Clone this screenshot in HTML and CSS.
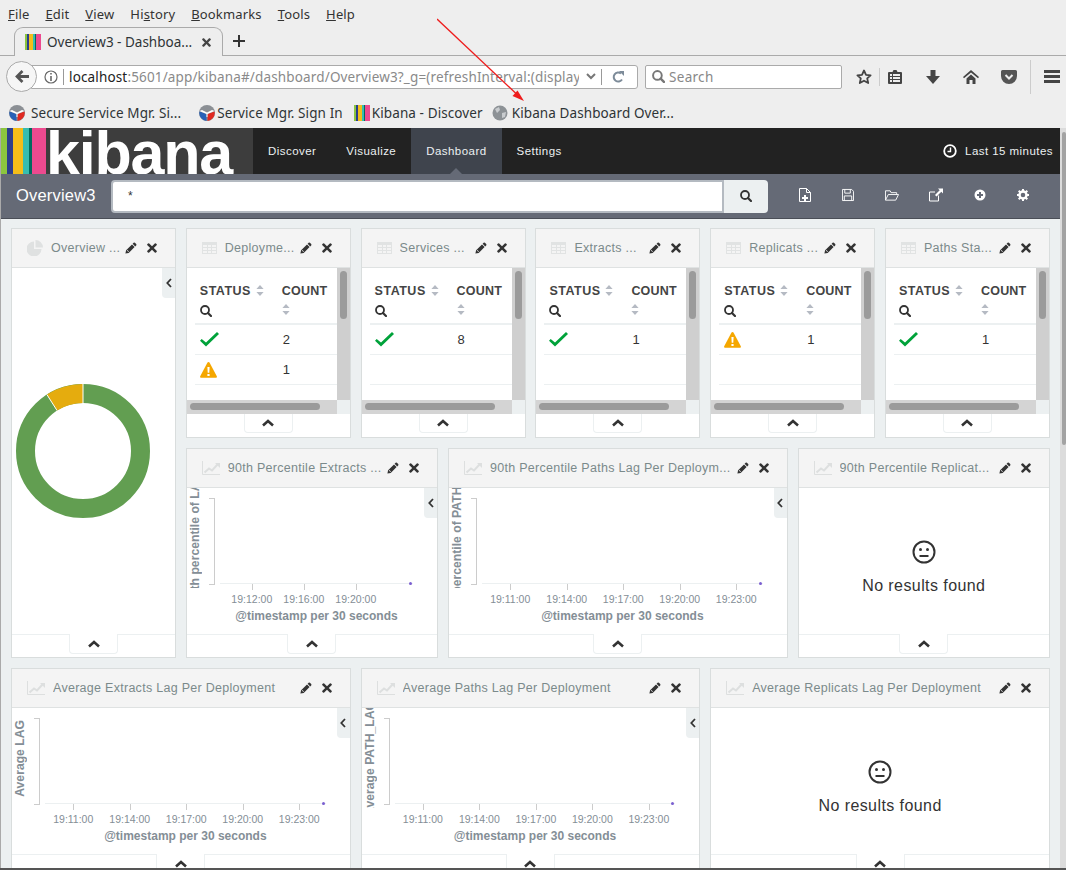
FILE: index.html
```html
<!DOCTYPE html>
<html lang="en">
<head>
    <meta charset="UTF-8">
    <title>Overview3 - Dashboard</title>
    <link rel="stylesheet" href="styles.css">
</head>
<body>
<svg class="defs" width="0" height="0">
    <symbol id="i-pencil" viewBox="0 0 12 12"><path d="M8.600.8a1 1 0 0 1 1.300 0l1.300 1.300a1 1 0 0 1 0 1.300l-1 1L7.600 1.800zM7 2.400 9.600 5 3.700 10.900.4 11.600 1.100 8.300zM1.900 8.600l1.500 1.500.5-.5-1.500-1.500z"/></symbol>
    <symbol id="i-close" viewBox="0 0 10 10"><path d="M2.200.4 5 3.200 7.800.4a.8.8 0 0 1 1.100 0l.7.7a.8.8 0 0 1 0 1.100L6.800 5l2.800 2.800a.8.8 0 0 1 0 1.100l-.7.7a.8.8 0 0 1-1.100 0L5 6.800 2.200 9.600a.8.8 0 0 1-1.100 0l-.7-.7a.8.8 0 0 1 0-1.100L3.200 5 .4 2.200a.8.8 0 0 1 0-1.100l.7-.7a.8.8 0 0 1 1.100 0z"/></symbol>
    <symbol id="i-search" viewBox="0 0 12 12"><path fill="none" stroke="currentColor" stroke-width="1.800" d="M5 1a4 4 0 1 0 0 8 4 4 0 0 0 0-8z"/><path fill="none" stroke="currentColor" stroke-width="2.200" stroke-linecap="round" d="M8 8l3 3"/></symbol>
    <symbol id="i-table" viewBox="0 0 15 12"><path fill="#e1e3e3" d="M0 0h15v12H0z"/><path fill="#f4f4f4" d="M1 3h4v2H1zm5 0h3v2H6zm4 0h4v2h-4zM1 6h4v2H1zm5 0h3v2H6zm4 0h4v2h-4zM1 9h4v2H1zm5 0h3v2H6zm4 0h4v2h-4z"/></symbol>
    <symbol id="i-line" viewBox="0 0 18 14"><path fill="none" stroke="#dddfdf" d="M.5 0v13.500H18"/><path fill="none" stroke="#dddfdf" stroke-width="2" d="M2.500 11.500l4.500-4 3 2 6-6.500"/><path fill="#dddfdf" d="M13 2h5v5z"/></symbol>
    <symbol id="i-sort" viewBox="0 0 8 11"><path fill="#b5bac3" d="M4 0l3.600 4H.4zM4 11 .4 7h7.200z"/></symbol>
    <symbol id="i-chevron" viewBox="0 0 12 8"><path fill="none" stroke="currentColor" stroke-width="2.600" d="M1 6.500l5-4.500 5 4.500"/></symbol>
    <symbol id="i-left" viewBox="0 0 6 10"><path fill="none" stroke="currentColor" stroke-width="1.800" d="M5 1 1.300 5 5 9"/></symbol>
    <symbol id="i-check" viewBox="0 0 19 15"><path fill="#00a23a" d="M1.700 7 0 8.700l6 5.800L19 2 17 0 6 10.500z"/></symbol>
    <symbol id="i-warn" viewBox="0 0 17 16"><path fill="#f5a700" d="M8.500 0c.5 0 .8.300 1 .6l7.300 13.700c.3.700-.1 1.500-1 1.500H1.200c-.9 0-1.300-.8-1-1.500L7.500.6c.2-.3.500-.6 1-.6z"/><path fill="#fff" d="M7.400 5h2.200l-.3 5.800H7.700zM7.400 12h2.200v2H7.400z"/></symbol>
    <symbol id="i-kibana" viewBox="0 0 16 16"><path fill="#8cc63f" d="M0 0h2v16H0z"/><path fill="#2c3e8c" d="M2 0h2v16H2z"/><path fill="#f4bd19" d="M4 0h4v16H4z"/><path fill="#36bdb0" d="M8 0h2v16H8z"/><path fill="#006b5e" d="M10 0h1v16h-1z"/><path fill="#ec4a8f" d="M11 0h5v16h-5z"/></symbol>
    <symbol id="i-shield" viewBox="0 0 16 16"><circle cx="8" cy="8" r="8" fill="#8b8f94"/><path fill="#2a62b8" d="M.5 6.500 7.500 9v7a8 8 0 0 1-7-9.500z"/><path fill="#e02a22" d="M15.500 6.500 8.500 9v7a8 8 0 0 0 7-9.500z"/><path fill="#fff" d="M.5 6 3 5 8 7.500 13 5l2.500 1L8.500 9v3l-1 0V9z"/></symbol>
    <symbol id="i-face" viewBox="0 0 24 24"><circle cx="12" cy="12" r="10.500" fill="none" stroke="#333" stroke-width="2"/><circle cx="8.500" cy="9.500" r="1.500" fill="#333"/><circle cx="15.500" cy="9.500" r="1.500" fill="#333"/><path stroke="#333" stroke-width="2" d="M7.500 16h9"/></symbol>
</svg>

<header class="browser">
    <nav class="menubar">
        <span><u>F</u>ile</span><span><u>E</u>dit</span><span><u>V</u>iew</span><span>Hi<u>s</u>tory</span><span><u>B</u>ookmarks</span><span><u>T</u>ools</span><span><u>H</u>elp</span>
    </nav>
    <div class="tabstrip">
        <div class="tab">
            <svg class="fav"><use href="#i-kibana"/></svg>
            <span class="tab-title">Overview3 - Dashboa...</span>
            <svg class="tab-close"><use href="#i-close"/></svg>
        </div>
        <svg class="new-tab" viewBox="0 0 12 12"><path d="M5 0h2v5h5v2H7v5H5V7H0V5h5z"/></svg>
    </div>
    <div class="toolbar">
        <div class="back">
            <svg viewBox="0 0 14 14"><path d="M7 1l1.800 1.800L6 5.600h8v2.800H6l2.800 2.800L7 13 1 7z"/></svg>
        </div>
        <div class="urlbar">
            <svg class="info" viewBox="0 0 14 14"><circle cx="7" cy="7" r="6" fill="none" stroke="#666" stroke-width="1.200"/><path fill="#666" d="M6.200 3h1.600v1.600H6.200zM6.200 6h1.600v5H6.200z"/></svg>
            <span class="sep"></span>
            <span class="url"><b>localhost</b>:5601/app/kibana#/dashboard/Overview3?_g=(refreshInterval:(display</span>
            <svg class="url-drop" viewBox="0 0 10 7"><path fill="none" stroke="#777" stroke-width="2" d="M1 1l4 4 4-4"/></svg>
            <span class="sep"></span>
            <svg class="reload" viewBox="0 0 12 12"><path fill="none" stroke="#7d8b99" stroke-width="2" d="M10 8.500A4.500 4.500 0 1 1 9 2.500"/><path fill="#7d8b99" d="M7 0h5v5z"/></svg>
        </div>
        <div class="searchbar">
            <svg viewBox="0 0 12 12" class="glass"><use href="#i-search"/></svg>
            <span>Search</span>
        </div>
        <div class="tool-icons">
            <svg class="ti star" viewBox="0 0 16 16"><path fill="none" stroke="#444" stroke-width="1.800" stroke-linejoin="round" d="M8 1.500l2 4.300 4.600.5-3.400 3.100 1 4.600L8 11.700 3.800 14l1-4.600L1.400 6.300 6 5.800z"/></svg>
            <span class="tool-sep"></span>
            <svg class="ti clip" viewBox="0 0 14 14"><path fill="#444" d="M5.500 0h3l1 2H13a1 1 0 0 1 1 1v10a1 1 0 0 1-1 1H1a1 1 0 0 1-1-1V3a1 1 0 0 1 1-1h3.500z"/><path fill="#eee" d="M2 4h10v2H2zM2 7h10v2H2zM2 10h10v2H2z"/><path fill="#444" d="M4 4h1v8H4z"/></svg>
            <svg class="ti down" viewBox="0 0 14 14"><path fill="#444" d="M4.500 0h5v6H14l-7 8-7-8h4.500z"/></svg>
            <svg class="ti home" viewBox="0 0 16 14"><path fill="#444" d="M8 0l8 7-1 1.200L8 2.400 1 8.200 0 7zM3.500 8.500 8 4.500l4.500 4V14H9.500V10h-3v4H3.500z"/></svg>
            <svg class="ti pocket" viewBox="0 0 16 14"><path fill="#555" d="M1.500 0h13A1.500 1.500 0 0 1 16 1.500V6a8 8 0 0 1-16 0V1.500A1.500 1.500 0 0 1 1.500 0z"/><path fill="none" stroke="#eee" stroke-width="2" d="M4.500 5 8 8.500 11.500 5"/></svg>
            <span class="tool-sep tall"></span>
            <svg class="ti burger" viewBox="0 0 16 13"><path fill="#444" d="M0 0h16v3H0zM0 5h16v3H0zM0 10h16v3H0z"/></svg>
        </div>
    </div>
    <div class="bookmarks">
        <span class="bm first"><svg class="fav"><use href="#i-shield"/></svg>Secure Service Mgr. Si...</span>
        <span class="bm second"><svg class="fav"><use href="#i-shield"/></svg>Service Mgr. Sign In</span>
        <span class="bm third"><svg class="fav"><use href="#i-kibana"/></svg>Kibana - Discover</span>
        <span class="bm fourth"><svg class="fav" viewBox="0 0 16 16"><circle cx="8" cy="8" r="7.500" fill="#8d9296"/><path fill="#c9cccf" d="M3 4l4-2 1 3-3 3zM10 8l4-1-1 5-3 1z"/></svg>Kibana Dashboard Over...</span>
    </div>
</header>

<div class="kibana">
    <div class="topnav">
        <div class="logo">
            <span class="stripes"><i class="s1"></i><i class="s2"></i><i class="s3"></i><i class="s4"></i><i class="s5"></i><i class="s6"></i></span>
            <span class="wordmark">kibana</span>
        </div>
        <a class="navlink">Discover</a>
        <a class="navlink">Visualize</a>
        <a class="navlink active">Dashboard</a>
        <a class="navlink">Settings</a>
        <div class="timepick">
            <svg viewBox="0 0 14 14"><circle cx="7" cy="7" r="5.800" fill="none" stroke="#fff" stroke-width="1.800"/><path fill="none" stroke="#fff" stroke-width="1.400" d="M7.500 3.500v4H4.500"/></svg>
            Last 15 minutes
        </div>
    </div>
    <div class="subnav">
        <span class="dash-title">Overview3</span>
        <div class="query">
            <div class="query-input">*</div>
            <div class="query-btn"><svg><use href="#i-search"/></svg></div>
        </div>
        <div class="actions">
            <svg viewBox="0 0 12 14"><path fill="none" stroke="#fff" d="M.5.500h7l4 4v9H.5zM7.500.500v4h4"/><path fill="#fff" d="M5 7h2v2h2v2H7v2H5v-2H3V9h2z"/></svg>
            <svg viewBox="0 0 13 13"><path fill="none" stroke="#fff" d="M.5.500h10l2 2v10H.5z"/><path fill="none" stroke="#fff" d="M3 .500v4h6v-4M2.500 12.500v-5h8v5"/></svg>
            <svg viewBox="0 0 15 12" class="wide"><path fill="none" stroke="#fff" d="M.5 11.500V1.500h5l1 2h6v2M.5 11.500h11l3-6h-11z"/></svg>
            <svg viewBox="0 0 14 13" class="wide"><path fill="none" stroke="#fff" d="M9.500 7v5.500h-9v-9H6"/><path fill="#fff" d="M9 0h5v5l-1.700-1.700L7.500 8 6 6.500l4.700-4.800z"/></svg>
            <svg viewBox="0 0 12 12"><circle cx="6" cy="6" r="5.500" fill="#fff"/><path fill="#656a76" d="M5 3h2v2h2v2H7v2H5V7H3V5h2z"/></svg>
            <svg viewBox="0 0 12 12"><circle cx="6" cy="6" r="3.500" fill="none" stroke="#fff" stroke-width="2.400"/><path stroke="#fff" stroke-width="2" d="M6 0v3M6 9v3M0 6h3M9 6h3M1.700 1.700l2 2M8.300 8.300l2 2M1.700 10.300l2-2M8.300 3.700l2-2"/></svg>
        </div>
    </div>

    <main class="dashboard">
        <section class="panel tall span2">
            <div class="panel-head">
                <svg class="type" viewBox="0 0 16 16"><path fill="#dfe1e1" d="M7 1.500V9h7.500A7.500 7.500 0 1 1 7 1.500zM8.500 0A7.500 7.500 0 0 1 16 7.500H8.500z"/></svg>
                <span class="title">Overview ...</span>
                <svg class="act"><use href="#i-pencil"/></svg>
                <svg class="act x"><use href="#i-close"/></svg>
            </div>
            <div class="panel-body">
                <div class="tab-left"><svg><use href="#i-left"/></svg></div>
                <svg class="donut" viewBox="0 0 134 134"><circle cx="67" cy="67" r="57.500" fill="none" stroke="#629e51" stroke-width="19"/><path fill="none" stroke="#e5ac0e" stroke-width="19" d="M67 9.500A57.500 57.500 0 0 0 36 18.600"/><path stroke="#fff" d="M67 0v19M41.100 26.600 30.900 10.600"/></svg>
            </div>
            <div class="panel-foot"><div class="foot-tab"><svg><use href="#i-chevron"/></svg></div></div>
        </section>

        <section class="panel span2 table-panel">
            <div class="panel-head">
                <svg class="type tbl"><use href="#i-table"/></svg>
                <span class="title">Deployme...</span>
                <svg class="act"><use href="#i-pencil"/></svg>
                <svg class="act x"><use href="#i-close"/></svg>
            </div>
            <div class="panel-body table-body">
                <div class="table-view">
                    <div class="t-head">
                        <div class="t-status">STATUS <svg class="sort"><use href="#i-sort"/></svg><svg class="t-search"><use href="#i-search"/></svg></div>
                        <div class="t-count">COUNT<svg class="sort"><use href="#i-sort"/></svg></div>
                    </div>
                    <div class="t-row"><svg class="check"><use href="#i-check"/></svg><span>2</span></div>
                    <div class="t-row"><svg class="warn"><use href="#i-warn"/></svg><span>1</span></div>
                </div>
                <div class="sb-v"><i></i></div>
                <div class="sb-h"><i></i></div>
                <div class="sb-corner"></div>
            </div>
            <div class="panel-foot"><div class="foot-tab"><svg><use href="#i-chevron"/></svg></div></div>
        </section>

        <section class="panel span2 table-panel">
            <div class="panel-head">
                <svg class="type tbl"><use href="#i-table"/></svg>
                <span class="title">Services ...</span>
                <svg class="act"><use href="#i-pencil"/></svg>
                <svg class="act x"><use href="#i-close"/></svg>
            </div>
            <div class="panel-body table-body">
                <div class="table-view">
                    <div class="t-head">
                        <div class="t-status">STATUS <svg class="sort"><use href="#i-sort"/></svg><svg class="t-search"><use href="#i-search"/></svg></div>
                        <div class="t-count">COUNT<svg class="sort"><use href="#i-sort"/></svg></div>
                    </div>
                    <div class="t-row"><svg class="check"><use href="#i-check"/></svg><span>8</span></div>
                    <div class="t-row"></div>
                </div>
                <div class="sb-v"><i></i></div>
                <div class="sb-h"><i></i></div>
                <div class="sb-corner"></div>
            </div>
            <div class="panel-foot"><div class="foot-tab"><svg><use href="#i-chevron"/></svg></div></div>
        </section>

        <section class="panel span2 table-panel">
            <div class="panel-head">
                <svg class="type tbl"><use href="#i-table"/></svg>
                <span class="title">Extracts ...</span>
                <svg class="act"><use href="#i-pencil"/></svg>
                <svg class="act x"><use href="#i-close"/></svg>
            </div>
            <div class="panel-body table-body">
                <div class="table-view">
                    <div class="t-head">
                        <div class="t-status">STATUS <svg class="sort"><use href="#i-sort"/></svg><svg class="t-search"><use href="#i-search"/></svg></div>
                        <div class="t-count">COUNT<svg class="sort"><use href="#i-sort"/></svg></div>
                    </div>
                    <div class="t-row"><svg class="check"><use href="#i-check"/></svg><span>1</span></div>
                    <div class="t-row"></div>
                </div>
                <div class="sb-v"><i></i></div>
                <div class="sb-h"><i></i></div>
                <div class="sb-corner"></div>
            </div>
            <div class="panel-foot"><div class="foot-tab"><svg><use href="#i-chevron"/></svg></div></div>
        </section>

        <section class="panel span2 table-panel">
            <div class="panel-head">
                <svg class="type tbl"><use href="#i-table"/></svg>
                <span class="title">Replicats ...</span>
                <svg class="act"><use href="#i-pencil"/></svg>
                <svg class="act x"><use href="#i-close"/></svg>
            </div>
            <div class="panel-body table-body">
                <div class="table-view">
                    <div class="t-head">
                        <div class="t-status">STATUS <svg class="sort"><use href="#i-sort"/></svg><svg class="t-search"><use href="#i-search"/></svg></div>
                        <div class="t-count">COUNT<svg class="sort"><use href="#i-sort"/></svg></div>
                    </div>
                    <div class="t-row"><svg class="warn"><use href="#i-warn"/></svg><span>1</span></div>
                    <div class="t-row"></div>
                </div>
                <div class="sb-v"><i></i></div>
                <div class="sb-h"><i></i></div>
                <div class="sb-corner"></div>
            </div>
            <div class="panel-foot"><div class="foot-tab"><svg><use href="#i-chevron"/></svg></div></div>
        </section>

        <section class="panel span2 table-panel">
            <div class="panel-head">
                <svg class="type tbl"><use href="#i-table"/></svg>
                <span class="title">Paths Sta...</span>
                <svg class="act"><use href="#i-pencil"/></svg>
                <svg class="act x"><use href="#i-close"/></svg>
            </div>
            <div class="panel-body table-body">
                <div class="table-view">
                    <div class="t-head">
                        <div class="t-status">STATUS <svg class="sort"><use href="#i-sort"/></svg><svg class="t-search"><use href="#i-search"/></svg></div>
                        <div class="t-count">COUNT<svg class="sort"><use href="#i-sort"/></svg></div>
                    </div>
                    <div class="t-row"><svg class="check"><use href="#i-check"/></svg><span>1</span></div>
                    <div class="t-row"></div>
                </div>
                <div class="sb-v"><i></i></div>
                <div class="sb-h"><i></i></div>
                <div class="sb-corner"></div>
            </div>
            <div class="panel-foot"><div class="foot-tab"><svg><use href="#i-chevron"/></svg></div></div>
        </section>

        <section class="panel span3">
            <div class="panel-head">
                <svg class="type line"><use href="#i-line"/></svg>
                <span class="title">90th Percentile Extracts ...</span>
                <svg class="act"><use href="#i-pencil"/></svg>
                <svg class="act x"><use href="#i-close"/></svg>
            </div>
            <div class="panel-body chart">
                <div class="tab-left"><svg><use href="#i-left"/></svg></div>
                <div class="y-title"><span>90th percentile of LAG</span></div>
                <div class="plot">
                    <div class="y-axis"></div>
                    <div class="x-axis">
                        <span class="dot"></span>
                        <div class="ticks ticks-a">
                            <span>19:12:00</span><span>19:16:00</span><span>19:20:00</span>
                        </div>
                    </div>
                </div>
                <div class="x-title">@timestamp per 30 seconds</div>
            </div>
            <div class="panel-foot"><div class="foot-tab"><svg><use href="#i-chevron"/></svg></div></div>
        </section>

        <section class="panel span4">
            <div class="panel-head">
                <svg class="type line"><use href="#i-line"/></svg>
                <span class="title">90th Percentile Paths Lag Per Deploym...</span>
                <svg class="act"><use href="#i-pencil"/></svg>
                <svg class="act x"><use href="#i-close"/></svg>
            </div>
            <div class="panel-body chart">
                <div class="tab-left"><svg><use href="#i-left"/></svg></div>
                <div class="y-title"><span>90th percentile of PATH_LAG</span></div>
                <div class="plot">
                    <div class="y-axis"></div>
                    <div class="x-axis">
                        <span class="dot"></span>
                        <div class="ticks ticks-b">
                            <span>19:11:00</span><span>19:14:00</span><span>19:17:00</span><span>19:20:00</span><span>19:23:00</span>
                        </div>
                    </div>
                </div>
                <div class="x-title">@timestamp per 30 seconds</div>
            </div>
            <div class="panel-foot"><div class="foot-tab"><svg><use href="#i-chevron"/></svg></div></div>
        </section>

        <section class="panel span3">
            <div class="panel-head">
                <svg class="type line"><use href="#i-line"/></svg>
                <span class="title">90th Percentile Replicat...</span>
                <svg class="act"><use href="#i-pencil"/></svg>
                <svg class="act x"><use href="#i-close"/></svg>
            </div>
            <div class="panel-body no-results">
                <svg><use href="#i-face"/></svg>
                <p>No results found</p>
            </div>
            <div class="panel-foot"><div class="foot-tab"><svg><use href="#i-chevron"/></svg></div></div>
        </section>

        <section class="panel span4">
            <div class="panel-head">
                <svg class="type line"><use href="#i-line"/></svg>
                <span class="title">Average Extracts Lag Per Deployment</span>
                <svg class="act"><use href="#i-pencil"/></svg>
                <svg class="act x"><use href="#i-close"/></svg>
            </div>
            <div class="panel-body chart">
                <div class="tab-left"><svg><use href="#i-left"/></svg></div>
                <div class="y-title"><span>Average LAG</span></div>
                <div class="plot">
                    <div class="y-axis"></div>
                    <div class="x-axis">
                        <span class="dot"></span>
                        <div class="ticks ticks-b">
                            <span>19:11:00</span><span>19:14:00</span><span>19:17:00</span><span>19:20:00</span><span>19:23:00</span>
                        </div>
                    </div>
                </div>
                <div class="x-title">@timestamp per 30 seconds</div>
            </div>
            <div class="panel-foot"><div class="foot-tab"><svg><use href="#i-chevron"/></svg></div></div>
        </section>

        <section class="panel span4">
            <div class="panel-head">
                <svg class="type line"><use href="#i-line"/></svg>
                <span class="title">Average Paths Lag Per Deployment</span>
                <svg class="act"><use href="#i-pencil"/></svg>
                <svg class="act x"><use href="#i-close"/></svg>
            </div>
            <div class="panel-body chart">
                <div class="tab-left"><svg><use href="#i-left"/></svg></div>
                <div class="y-title"><span>Average PATH_LAG</span></div>
                <div class="plot">
                    <div class="y-axis"></div>
                    <div class="x-axis">
                        <span class="dot"></span>
                        <div class="ticks ticks-b">
                            <span>19:11:00</span><span>19:14:00</span><span>19:17:00</span><span>19:20:00</span><span>19:23:00</span>
                        </div>
                    </div>
                </div>
                <div class="x-title">@timestamp per 30 seconds</div>
            </div>
            <div class="panel-foot"><div class="foot-tab"><svg><use href="#i-chevron"/></svg></div></div>
        </section>

        <section class="panel span4">
            <div class="panel-head">
                <svg class="type line"><use href="#i-line"/></svg>
                <span class="title">Average Replicats Lag Per Deployment</span>
                <svg class="act"><use href="#i-pencil"/></svg>
                <svg class="act x"><use href="#i-close"/></svg>
            </div>
            <div class="panel-body no-results">
                <svg><use href="#i-face"/></svg>
                <p>No results found</p>
            </div>
            <div class="panel-foot"><div class="foot-tab"><svg><use href="#i-chevron"/></svg></div></div>
        </section>
    </main>
    <div class="page-scroll"><i></i></div>
</div>

<svg class="arrow" width="120" height="90" viewBox="0 0 120 90"><path stroke="#ee1c1c" stroke-width="1.300" d="M0 1 79 75.500"/><path fill="#ee1c1c" d="M87 83 75.500 78 80.500 72.500z"/></svg>
<div class="bottom-line"></div>
</body>
</html>
```

FILE: styles.css
```css
html, body {
    margin: 0;
    padding: 0;
    height: 870px;
    overflow: hidden;
}
body {
    position: relative;
    font-family: "Noto Sans", "DejaVu Sans", sans-serif;
    background-color: #eee;
}
.defs {
    position: absolute;
}
svg {
    display: block;
    fill: currentColor;
}

/* browser window */
.browser {
    height: 128px;
    background-color: #eee;
    color: #2e3436;
    font-size: 13.500px;
    box-sizing: border-box;
}
.menubar {
    display: flex;
    gap: 16px;
    height: 27px;
    padding-left: 8px;
    align-items: center;
    font-size: 13px;
    letter-spacing: 0.15px;
    color: #333;
}
.tabstrip {
    display: flex;
    align-items: flex-end;
    height: 29px;
    border-bottom: 1px solid #aaa;
    box-sizing: border-box;
}
.tab {
    display: flex;
    align-items: center;
    width: 209px;
    height: 29px;
    margin-left: 14px;
    margin-bottom: -1px;
    padding-left: 10px;
    box-sizing: border-box;
    background-color: #eee;
    border: 1px solid #aaa;
    border-bottom: none;
    border-radius: 9px 9px 0 0;
}
.fav {
    width: 16px;
    height: 16px;
    flex: none;
}
.tab-title {
    margin-left: 6px;
    white-space: nowrap;
}
.tab-close {
    width: 9px;
    height: 9px;
    margin-left: 10px;
    color: #444;
}
.new-tab {
    width: 12px;
    height: 12px;
    margin: 0 0 8px 10px;
    color: #333;
}
.toolbar {
    display: flex;
    align-items: center;
    height: 41px;
    position: relative;
}
.back {
    width: 31px;
    height: 31px;
    margin-left: 6px;
    box-sizing: border-box;
    border: 1px solid #aaa;
    border-radius: 50%;
    background-color: #f6f6f6;
    display: flex;
    align-items: center;
    justify-content: center;
    color: #555;
    z-index: 1;
    flex: none;
}
.back svg {
    width: 15px;
    height: 15px;
}
.urlbar {
    display: flex;
    align-items: center;
    width: 607px;
    height: 24px;
    margin-left: -6px;
    padding-left: 12px;
    background-color: #fff;
    border: 1px solid #aaa;
    border-radius: 0 3px 3px 0;
    flex: none;
    box-sizing: border-box;
    overflow: hidden;
}
.info {
    width: 14px;
    height: 14px;
    flex: none;
}
.sep {
    width: 1px;
    height: 16px;
    background-color: #999;
    margin: 0 5px;
    flex: none;
}
.url {
    width: 510px;
    overflow: hidden;
    white-space: nowrap;
    color: #8a8a8a;
    flex: none;
    font-size: 13.500px;
    letter-spacing: 0.15px;
}
.url b {
    font-weight: normal;
    color: #222;
}
.url-drop {
    width: 10px;
    height: 7px;
    margin-left: 7px;
    flex: none;
}
.reload {
    width: 12px;
    height: 12px;
    margin-left: 5px;
    flex: none;
}
.searchbar {
    display: flex;
    align-items: center;
    width: 197px;
    height: 24px;
    margin-left: 7px;
    padding-left: 6px;
    background-color: #fff;
    border: 1px solid #aaa;
    border-radius: 2px;
    box-sizing: border-box;
    color: #888;
    flex: none;
    letter-spacing: 0.3px;
}
.glass {
    width: 13px;
    height: 13px;
    margin-right: 4px;
    color: #777;
}
.tool-icons {
    display: flex;
    align-items: center;
    margin-left: 14px;
}
.ti {
    flex: none;
}
.star {
    width: 16px;
    height: 16px;
}
.tool-sep {
    width: 1px;
    height: 18px;
    background-color: #ccc;
    margin: 0 8px 0 7px;
}
.tool-sep.tall {
    height: 34px;
    margin: 0 13px 0 13px;
}
.clip {
    width: 14px;
    height: 14px;
}
.down {
    width: 14px;
    height: 14px;
    margin-left: 24px;
}
.home {
    width: 16px;
    height: 14px;
    margin-left: 23px;
}
.pocket {
    width: 16px;
    height: 14px;
    margin-left: 22px;
}
.burger {
    width: 16px;
    height: 13px;
}
.bookmarks {
    display: flex;
    align-items: center;
    height: 31px;
    padding-left: 9px;
    box-sizing: border-box;
    letter-spacing: 0.1px;
}
.bm {
    display: flex;
    align-items: center;
    white-space: nowrap;
    gap: 6px;
}
.second {
    margin-left: 18px;
    gap: 2px;
}
.third {
    margin-left: 11px;
    gap: 2px;
}
.fourth {
    margin-left: 9px;
    gap: 4px;
}

/* kibana */
.kibana {
    position: relative;
    height: 742px;
    padding-right: 6px;
    background-color: #ecf0f1;
    border-left: 1px solid #aaa;
    box-sizing: border-box;
    overflow: hidden;
}
.topnav {
    display: flex;
    align-items: stretch;
    height: 46px;
    background-color: #222;
    color: #ecf0f1;
    font-family: "Liberation Sans", Arial, sans-serif;
    font-size: 11.500px;
    letter-spacing: 0.45px;
}
.logo {
    display: flex;
    width: 252px;
    height: 46px;
    background-color: #3d3d3d;
    overflow: hidden;
    flex: none;
}
.stripes {
    display: flex;
    width: 45px;
    height: 46px;
    flex: none;
}
.stripes i {
    display: block;
    height: 100%;
}
.s1 { width: 6px; background-color: #8cc63f; }
.s2 { width: 6px; background-color: #2c3e8c; }
.s3 { width: 10px; background-color: #f4bd19; }
.s4 { width: 6px; background-color: #36bdb0; }
.s5 { width: 3px; background-color: #006b5e; }
.s6 { width: 14px; background-color: #ec4a8f; }
.wordmark {
    font-family: "Liberation Sans", Arial, sans-serif;
    font-size: 61px;
    font-weight: bold;
    line-height: 46px;
    letter-spacing: -1.200px;
    color: #fff;
    height: 46px;
    padding-top: 2px;
}
.navlink {
    display: flex;
    align-items: center;
    padding: 0 15px;
}
.navlink.active {
    position: relative;
    background-color: #3f444d;
}
.navlink.active::after {
    content: "";
    position: absolute;
    left: 50%;
    bottom: 0;
    margin-left: -6px;
    border: 6px solid transparent;
    border-top: none;
    border-bottom-color: #656a76;
}
.timepick {
    margin-left: auto;
    display: flex;
    align-items: center;
    gap: 8px;
    padding-right: 7px;
}
.timepick svg {
    width: 14px;
    height: 14px;
}
.subnav {
    display: flex;
    align-items: center;
    height: 45px;
    background-color: #656a76;
    border-bottom: 1px solid #4a4e57;
    box-sizing: border-box;
    color: #fff;
    font-family: "Liberation Sans", Arial, sans-serif;
}
.dash-title {
    width: 110px;
    padding-left: 15px;
    padding-bottom: 2px;
    box-sizing: border-box;
    font-size: 16.500px;
    letter-spacing: 0.2px;
    flex: none;
}
.query {
    display: flex;
    width: 657px;
    height: 33px;
    flex: none;
}
.query-input {
    flex: 1;
    background-color: #fff;
    border: 2px solid #b4bac1;
    border-right-width: 2px;
    border-radius: 4px 0 0 4px;
    color: #333;
    font-size: 12px;
    padding: 7px 15px;
    box-sizing: border-box;
}
.query-btn {
    width: 44px;
    background-color: #ecf0f1;
    border-radius: 0 4px 4px 0;
    display: flex;
    align-items: center;
    justify-content: center;
    color: #333;
}
.query-btn svg {
    width: 12px;
    height: 12px;
}
.actions {
    display: flex;
    align-items: center;
    justify-content: space-between;
    width: 230px;
    margin-left: 31px;
    padding-bottom: 2px;
}
.actions svg {
    width: 12px;
    height: 14px;
    flex: none;
}
.actions svg.wide {
    width: 14px;
}

/* dashboard grid */
.dashboard {
    display: grid;
    grid-template-columns: repeat(12, 1fr);
    grid-auto-rows: 210px;
    column-gap: 9.800px;
    row-gap: 10px;
    width: 1039px;
    margin-left: 10px;
    padding-top: 9px;
    font-family: "Liberation Sans", Arial, sans-serif;
}
.panel {
    display: flex;
    flex-direction: column;
    background-color: #fff;
    border: 1px solid #d9dddd;
    box-sizing: border-box;
    min-width: 0;
    overflow: hidden;
}
.span2 { grid-column: span 2; }
.span3 { grid-column: span 3; }
.span4 { grid-column: span 4; }
.tall { grid-row: span 2; }
.panel-head {
    display: flex;
    align-items: center;
    height: 39px;
    padding-left: 15px;
    padding-right: 18px;
    background-color: #f4f4f4;
    border-bottom: 1px solid #dfe2e2;
    box-sizing: border-box;
    flex: none;
    color: #7b8a8b;
    font-size: 12.500px;
    letter-spacing: 0.28px;
}
.type {
    width: 16px;
    height: 16px;
    flex: none;
}
.type.tbl {
    width: 15px;
    height: 12px;
}
.type.line {
    width: 18px;
    height: 14px;
}
.title {
    flex: 1;
    min-width: 0;
    margin-left: 8px;
    white-space: nowrap;
    overflow: hidden;
}
.act {
    width: 12px;
    height: 12px;
    color: #333;
    flex: none;
}
.act.x {
    width: 10px;
    height: 10px;
    margin-left: 10px;
}
.panel-body {
    position: relative;
    flex: 1;
    min-height: 0;
}
.panel-foot {
    position: relative;
    height: 23px;
    flex: none;
    display: flex;
    justify-content: center;
    border-top: 1px solid #ecf0f1;
    box-sizing: border-box;
}
.table-panel .panel-foot {
    border-top: none;
}
.foot-tab {
    width: 49px;
    height: 20px;
    margin-top: -1px;
    box-sizing: border-box;
    background-color: #fff;
    border: 1px solid #ecf0f1;
    border-top: none;
    border-radius: 0 0 4px 4px;
    display: flex;
    align-items: center;
    justify-content: center;
    color: #333;
}
.table-panel .foot-tab {
    margin-top: 0;
    height: 19px;
}
.foot-tab svg {
    width: 12px;
    height: 8px;
}
.tab-left {
    position: absolute;
    right: 0;
    top: 0;
    width: 13px;
    height: 30px;
    background-color: #ecf0f1;
    border-radius: 0 0 0 4px;
    display: flex;
    align-items: center;
    justify-content: center;
    color: #333;
}
.tab-left svg {
    width: 6px;
    height: 10px;
}
.donut {
    position: absolute;
    left: 4px;
    top: 116px;
    width: 134px;
    height: 134px;
}

/* table panels */
.table-view {
    position: absolute;
    left: 8px;
    top: 0;
    right: 13px;
    bottom: 14px;
    overflow: hidden;
    color: #333;
    font-size: 13px;
}
.t-head {
    display: flex;
    height: 57px;
    border-bottom: 2px solid #ecf0f1;
    box-sizing: border-box;
    font-weight: bold;
    letter-spacing: 0.5px;
    font-size: 12.500px;
    color: #444;
}
.t-status {
    position: relative;
    width: 87px;
    flex: none;
    padding: 16px 0 0 5px;
    box-sizing: border-box;
}
.t-count {
    position: relative;
    padding-top: 16px;
    letter-spacing: 0.2px;
}
.sort {
    width: 8px;
    height: 11px;
}
.t-status .sort {
    position: absolute;
    left: 61px;
    top: 17px;
}
.t-count .sort {
    position: absolute;
    left: 0;
    top: 36px;
}
.t-search {
    position: absolute;
    left: 5px;
    top: 37px;
    width: 12px;
    height: 12px;
    color: #333;
}
.t-row {
    display: flex;
    align-items: center;
    height: 30px;
    border-bottom: 1px solid #ecf0f1;
    box-sizing: border-box;
}
.t-row span {
    position: absolute;
    left: 88px;
}
.check {
    width: 19px;
    height: 15px;
    margin-left: 5px;
}
.warn {
    width: 17px;
    height: 16px;
    margin-left: 5px;
}
.sb-v {
    position: absolute;
    right: 0;
    top: 0;
    bottom: 14px;
    width: 13px;
    background-color: #cfcfcf;
}
.sb-v i {
    display: block;
    width: 7px;
    height: 48px;
    margin: 3px 0 0 3px;
    background-color: #9b9b9b;
    border-radius: 4px;
}
.sb-h {
    position: absolute;
    left: 0;
    bottom: 0;
    right: 13px;
    height: 14px;
    background-color: #d4d4d4;
}
.sb-h i {
    display: block;
    width: 130px;
    height: 7px;
    margin: 3px 0 0 3px;
    background-color: #9b9b9b;
    border-radius: 4px;
}
.sb-corner {
    position: absolute;
    right: 0;
    bottom: 0;
    width: 13px;
    height: 14px;
    background-color: #ecf0f1;
}

/* charts */
.y-title {
    position: absolute;
    left: 1px;
    top: 0;
    width: 14px;
    height: 100px;
    overflow: hidden;
    display: flex;
    flex-direction: column;
    align-items: center;
    justify-content: center;
}
.y-title span {
    display: block;
    flex: none;
    white-space: nowrap;
    writing-mode: vertical-rl;
    transform: rotate(180deg);
    font-size: 12.200px;
    font-weight: bold;
    color: #848e96;
    line-height: 14px;
}
.plot {
    position: absolute;
    left: 22px;
    top: 10px;
    right: 24px;
    height: 87px;
}
.y-axis {
    position: absolute;
    left: 0;
    top: 0;
    width: 6px;
    height: 87px;
    border: 1px solid #ccc;
    border-left: none;
    box-sizing: border-box;
}
.x-axis {
    position: absolute;
    left: 11px;
    right: 0;
    top: 85px;
    border-top: 1px solid #ecf0f1;
}
.dot {
    position: absolute;
    right: 1px;
    top: -2px;
    width: 3px;
    height: 3px;
    border-radius: 50%;
    background-color: #7a5fd0;
}
.ticks {
    position: absolute;
    top: 0;
    left: 0;
    right: 0;
    display: flex;
    color: #848e96;
    font-size: 10.500px;
}
.ticks span {
    position: relative;
    padding-top: 9px;
    white-space: nowrap;
    text-align: center;
    width: 56.500px;
    flex: none;
}
.ticks span::before {
    content: "";
    position: absolute;
    left: 50%;
    top: 0;
    width: 1px;
    height: 6px;
    background-color: #ccc;
}
.ticks-a {
    padding-left: 6px;
}
.ticks-a span {
    width: 52px;
}
.x-title {
    position: absolute;
    left: 33px;
    right: 24px;
    top: 121px;
    text-align: center;
    font-size: 12px;
    font-weight: bold;
    color: #848e96;
    white-space: nowrap;
}
.no-results {
    display: flex;
    flex-direction: column;
    align-items: center;
    padding-top: 52px;
    box-sizing: border-box;
    color: #333;
}
.no-results svg {
    width: 24px;
    height: 24px;
}
.no-results p {
    margin: 13px 0 0;
    font-size: 16px;
    letter-spacing: 0.42px;
}

.page-scroll {
    position: absolute;
    right: 0;
    top: 0;
    bottom: 0;
    width: 6px;
    background-color: #dcdcdc;
}
.page-scroll i {
    display: block;
    width: 4px;
    height: 313px;
    margin: 4px 0 0 2px;
    background-color: #a3a3a3;
    border-radius: 3px;
}
.arrow {
    position: absolute;
    left: 437px;
    top: 18px;
}
.bottom-line {
    position: absolute;
    left: 0;
    right: 0;
    bottom: 0;
    height: 2px;
    background-color: #555;
}
```
